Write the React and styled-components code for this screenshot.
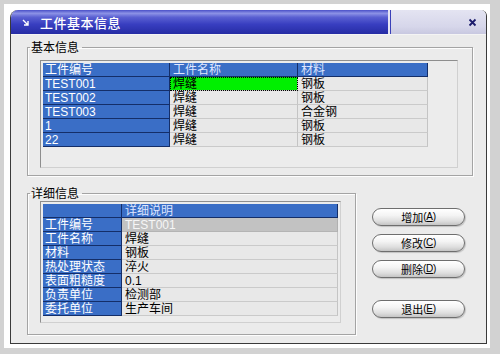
import React from "react";
import styled, { createGlobalStyle } from "styled-components";

const GlobalStyle = createGlobalStyle`
  html, body {
    margin: 0;
    padding: 0;
    background: #d2d2d2;
  }
  body {
    font-family: "Liberation Sans", "Noto Sans CJK SC", sans-serif;
    font-size: 12px;
  }
  * {
    box-sizing: border-box;
  }
`;

const Screen = styled.div`
  width: 500px;
  height: 354px;
  padding: 4px 10px 6px 4px;
  background: #d2d2d2;
`;

const Mat = styled.div`
  width: 100%;
  height: 100%;
  background: #fff;
  padding: 6px 3px 4px 6px;
`;

const Window = styled.div`
  height: 100%;
  display: flex;
  flex-direction: column;
  background: #ebebeb;
  border: 1px solid #3a3a3a;
  border-top: none;
  border-radius: 8px 6px 0 0;
  overflow: hidden;
`;

const TitleBar = styled.div`
  height: 25px;
  display: flex;
  flex-shrink: 0;
  border-bottom: 1px solid #f4f4f4;
`;

const TitleMain = styled.div`
  flex: 1;
  display: flex;
  align-items: center;
  gap: 11px;
  padding-left: 11px;
  background: linear-gradient(
    to bottom,
    #4a50c8 0%,
    #8c92e6 14%,
    #5a60d2 30%,
    #383ec0 60%,
    #262ca4 100%
  );
`;

const TitleText = styled.span`
  color: #fff;
  font-size: 13px;
  font-family: "Noto Sans CJK SC", sans-serif;
  font-weight: 500;
  letter-spacing: 0.5px;
`;

const TitleTail = styled.div`
  width: 98px;
  display: flex;
  align-items: center;
  justify-content: flex-end;
  padding-right: 9px;
  border-left: 2px solid #e6e6f4;
  box-shadow: inset 1px 0 0 #3a40b8;
  background: linear-gradient(to bottom, #e4e4f2 0%, #d6d6ea 70%, #c8c8e0 100%);
`;

const Body = styled.div`
  flex: 1;
  display: flex;
  flex-direction: column;
  gap: 10px;
  padding: 5px 13px 8px 16px;
`;

const Group = styled.fieldset`
  margin: 0;
  padding: 0;
  min-width: 0;
  width: ${(p) => p.$width || "auto"};
  border: 1px solid #a4a4a4;
  box-shadow: inset 1px 1px 0 #fdfdfd, 1px 1px 0 #fdfdfd;
`;

const Legend = styled.legend`
  margin-left: 2px;
  padding: 0 3px 0 1px;
  font-size: 12px;
  line-height: 14px;
  color: #000;
  font-family: "Noto Sans CJK SC", sans-serif;
`;

const ListBox = styled.div`
  width: ${(p) => p.$width}px;
  height: ${(p) => p.$height}px;
  margin: ${(p) => p.$margin};
  padding: 2px;
  background: #ececec;
  border: 1px solid;
  border-color: #8e8e8e #d0d0d0 #d0d0d0 #8e8e8e;
`;

const Grid = styled.div`
  display: grid;
  grid-template-columns: ${(p) => p.$cols};
  grid-auto-rows: 14px;
  width: max-content;
`;

const toneStyles = {
  blue: "background: #3a6ec6; color: #fff; border-right-color: #142e68; border-bottom-color: #142e68;",
  head: "background: #3a6ec6; color: #dfe6ff; border-right-color: #142e68; border-bottom-color: #142e68;",
  plain: "background: #e8e8e8; color: #000; border-right-color: #c4c4c4; border-bottom-color: #cacaca;",
  green: "background: #00f000; color: #000; border-right-color: #c4c4c4; border-bottom-color: #cacaca; outline: 1px dotted #000; outline-offset: -1px;",
  disabled: "background: #c2c2c2; color: #f6f6f6; border-right-color: #b0b0b0; border-bottom-color: #b4b4b4;",
};

const Cell = styled.div`
  height: 14px;
  padding: 1px 0 0 ${(p) => (p.$tone === "blue" ? 2 : 3)}px;
  font-size: 12px;
  line-height: 13px;
  white-space: nowrap;
  overflow: hidden;
  border-right: 1px solid transparent;
  border-bottom: 1px solid transparent;
  ${(p) => toneStyles[p.$tone]}
`;

const DetailRow = styled.div`
  display: flex;
  align-items: flex-start;
`;

const Buttons = styled.div`
  display: flex;
  flex-direction: column;
  gap: 8px;
  margin-left: 16px;
  padding-top: 22px;
`;

const Button = styled.button`
  width: 93px;
  height: 18px;
  margin-top: ${(p) => p.$push || 0}px;
  padding: 0;
  display: flex;
  align-items: center;
  justify-content: center;
  border: 1px solid #6e6e6e;
  border-radius: 9px;
  background: linear-gradient(to bottom, #ffffff 0%, #f4f4f4 40%, #dedede 75%, #c4c4c4 100%);
  box-shadow: inset 0 1px 0 #fff, 1px 1px 1px rgba(0, 0, 0, 0.18);
  color: #000;
  font-family: "Noto Sans CJK SC", sans-serif;
  font-size: 11px;
  line-height: 14px;
`;

const Hotkey = styled.span`
  font-family: "Liberation Sans", sans-serif;
  font-size: 10px;
  letter-spacing: -0.3px;

  u {
    text-decoration: underline;
  }
`;

const parts = [
  ["TEST001", "焊缝", "钢板"],
  ["TEST002", "焊缝", "钢板"],
  ["TEST003", "焊缝", "合金钢"],
  ["1", "焊缝", "钢板"],
  ["22", "焊缝", "钢板"],
];

const details = [
  ["工件编号", "TEST001", "disabled"],
  ["工件名称", "焊缝", "plain"],
  ["材料", "钢板", "plain"],
  ["热处理状态", "淬火", "plain"],
  ["表面粗糙度", "0.1", "plain"],
  ["负责单位", "检测部", "plain"],
  ["委托单位", "生产车间", "plain"],
];

const actions = [
  { label: "增加", key: "A" },
  { label: "修改", key: "C" },
  { label: "删除", key: "D" },
  { label: "退出", key: "E", push: 14 },
];

function ArrowIcon() {
  return (
    <svg width="7" height="7" viewBox="0 0 7 7">
      <path d="M1 1 L5.5 5.5 M6 2 V6 H2" stroke="#fff" strokeWidth="1.4" fill="none" />
    </svg>
  );
}

function CloseIcon() {
  return (
    <svg width="9" height="9" viewBox="0 0 9 9">
      <path d="M1.5 1.5 L7.5 7.5 M7.5 1.5 L1.5 7.5" stroke="#1c1c6c" strokeWidth="1.8" />
    </svg>
  );
}

export default function App() {
  return (
    <Screen>
      <GlobalStyle />
      <Mat>
        <Window>
          <TitleBar>
            <TitleMain>
              <ArrowIcon />
              <TitleText>工件基本信息</TitleText>
            </TitleMain>
            <TitleTail>
              <CloseIcon />
            </TitleTail>
          </TitleBar>

          <Body>
            <Group>
              <Legend>基本信息</Legend>
              <ListBox $width={418} $height={108} $margin="6px 14px 7px 12px">
                <Grid $cols="127px 128px 130px">
                  <Cell $tone="blue">工件编号</Cell>
                  <Cell $tone="head">工件名称</Cell>
                  <Cell $tone="head">材料</Cell>
                  {parts.map(([id, name, mat], i) => (
                    <React.Fragment key={id}>
                      <Cell $tone="blue">{id}</Cell>
                      <Cell $tone={i === 0 ? "green" : "plain"}>{name}</Cell>
                      <Cell $tone="plain">{mat}</Cell>
                    </React.Fragment>
                  ))}
                </Grid>
              </ListBox>
            </Group>

            <DetailRow>
              <Group $width="329px">
                <Legend>详细信息</Legend>
                <ListBox $width={301} $height={122} $margin="1px 14px 11px 12px">
                  <Grid $cols="79px 216px">
                    <Cell $tone="blue" />
                    <Cell $tone="head">详细说明</Cell>
                    {details.map(([label, value, tone]) => (
                      <React.Fragment key={label}>
                        <Cell $tone="blue">{label}</Cell>
                        <Cell $tone={tone}>{value}</Cell>
                      </React.Fragment>
                    ))}
                  </Grid>
                </ListBox>
              </Group>

              <Buttons>
                {actions.map((a) => (
                  <Button key={a.key} $push={a.push}>
                    {a.label}
                    <Hotkey>
                      (<u>{a.key}</u>)
                    </Hotkey>
                  </Button>
                ))}
              </Buttons>
            </DetailRow>
          </Body>
        </Window>
      </Mat>
    </Screen>
  );
}
